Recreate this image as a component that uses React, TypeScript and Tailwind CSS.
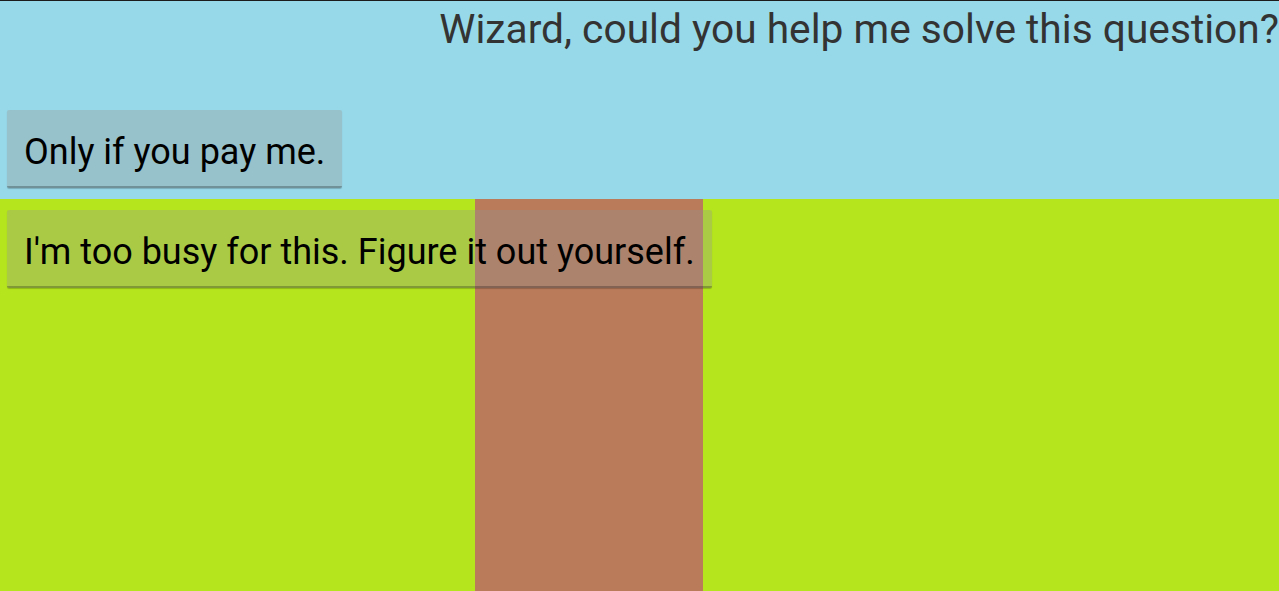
const App = () => {
  const options = [
    "Only if you pay me.",
    "I'm too busy for this. Figure it out yourself.",
  ]

  return (
    <div className="relative w-[1279px] h-[591px] overflow-hidden font-['Roboto',sans-serif]">
      {/* scene */}
      <div className="flex flex-col h-full">
        <div className="h-px bg-[#1c1c1c]" />
        <div className="h-[198px] bg-[#98d9e9]" />
        <div className="flex-1 flex bg-[#b5e61d]">
          <div className="w-[475px]" />
          <div className="w-[228px] bg-[#b97b5a]" />
        </div>
      </div>

      {/* dialog */}
      <div className="absolute inset-0 flex flex-col">
        <p className="text-right text-[40.7px] leading-[46px] text-[#333333] pt-[6px] whitespace-nowrap">
          Wizard, could you help me solve this question?
        </p>
        <div className="flex flex-col items-start gap-[22px] pl-[7px] mt-[58px]">
          {options.map((text, i) => (
            <button
              key={i}
              className="h-[78px] px-[17px] pt-[7px] bg-[#949494]/35 border-b-2 border-[#000]/25 rounded-[2px] text-[36px] text-black whitespace-nowrap shadow-[0_1px_1px_rgba(0,0,0,0.2)]"
            >
              {text}
            </button>
          ))}
        </div>
      </div>
    </div>
  )
}

export default App
